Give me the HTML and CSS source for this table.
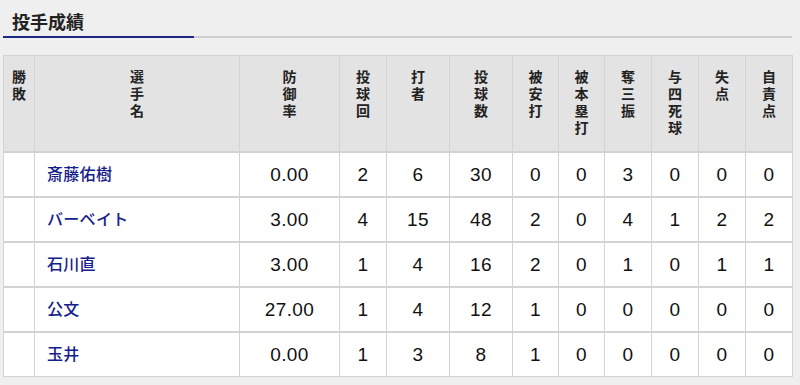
FILE: index.html
```html
<!DOCTYPE html>
<html lang="ja">
<head>
<meta charset="utf-8">
<link rel="stylesheet" href="styles.css">
</head>
<body>
<div class="page">
  <div class="heading">
    <h2 class="title">投手成績</h2>
    <div class="rule"><span class="rule-accent"></span><span class="rule-rest"></span></div>
  </div>
  <table class="stats">
    <colgroup>
      <col style="width:31px"><col style="width:205px"><col style="width:100px"><col style="width:47px">
      <col style="width:63px"><col style="width:63px"><col style="width:46px"><col style="width:46px">
      <col style="width:47px"><col style="width:47px"><col style="width:47px"><col style="width:47px">
    </colgroup>
    <thead>
      <tr>
        <th>勝<br>敗</th>
        <th>選<br>手<br>名</th>
        <th>防<br>御<br>率</th>
        <th>投<br>球<br>回</th>
        <th>打<br>者</th>
        <th>投<br>球<br>数</th>
        <th>被<br>安<br>打</th>
        <th>被<br>本<br>塁<br>打</th>
        <th>奪<br>三<br>振</th>
        <th>与<br>四<br>死<br>球</th>
        <th>失<br>点</th>
        <th>自<br>責<br>点</th>
      </tr>
    </thead>
    <tbody>
      <tr><td></td><td class="name">斎藤佑樹</td><td>0.00</td><td>2</td><td>6</td><td>30</td><td>0</td><td>0</td><td>3</td><td>0</td><td>0</td><td>0</td></tr>
      <tr><td></td><td class="name">バーベイト</td><td>3.00</td><td>4</td><td>15</td><td>48</td><td>2</td><td>0</td><td>4</td><td>1</td><td>2</td><td>2</td></tr>
      <tr><td></td><td class="name">石川直</td><td>3.00</td><td>1</td><td>4</td><td>16</td><td>2</td><td>0</td><td>1</td><td>0</td><td>1</td><td>1</td></tr>
      <tr><td></td><td class="name">公文</td><td>27.00</td><td>1</td><td>4</td><td>12</td><td>1</td><td>0</td><td>0</td><td>0</td><td>0</td><td>0</td></tr>
      <tr><td></td><td class="name">玉井</td><td>0.00</td><td>1</td><td>3</td><td>8</td><td>1</td><td>0</td><td>0</td><td>0</td><td>0</td><td>0</td></tr>
    </tbody>
  </table>
</div>
</body>
</html>
```

FILE: styles.css
```css
html, body {
  margin: 0;
  padding: 0;
  background: #efefef;
}
body {
  font-family: "Liberation Sans", "Noto Sans CJK JP", sans-serif;
  color: #111;
}
.page {
  padding: 8px 8px 0 3px;
}
.heading {
  margin-bottom: 17px;
}
.title {
  margin: 0;
  padding: 0 0 2px 9px;
  font-family: "Noto Sans CJK JP", sans-serif;
  font-size: 18px;
  line-height: 26px;
  font-weight: bold;
  color: #222;
}
.rule {
  display: flex;
  height: 2px;
}
.rule-accent {
  width: 191px;
  background: #1b2a7e;
}
.rule-rest {
  flex: 1;
  background: #cfcfcf;
}
.stats {
  width: 789px;
  border-collapse: collapse;
  table-layout: fixed;
  background: #fff;
}
.stats th {
  background: #e3e3e3;
  font-family: "Noto Sans CJK JP", sans-serif;
  font-size: 14px;
  line-height: 17px;
  font-weight: bold;
  color: #222;
  vertical-align: top;
  text-align: center;
  padding: 12px 0 15px;
  border: 1px solid #d3d3d3;
  border-bottom-width: 2px;
}
.stats td {
  height: 43px;
  padding: 0;
  text-align: center;
  font-size: 19px;
  letter-spacing: 0.4px;
  color: #111;
  border: 1px solid #d3d3d3;
  border-top-width: 2px;
}
.stats td.name {
  text-align: left;
  padding: 0 0 3px 12px;
  height: 40px;
  font-family: "Noto Sans CJK JP", sans-serif;
  font-size: 16px;
  letter-spacing: 0.3px;
  font-weight: 500;
  color: #15208a;
}
```
